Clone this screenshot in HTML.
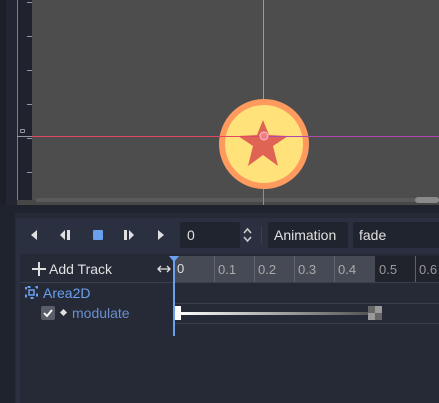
<!DOCTYPE html><html><head><style>
body{margin:0;width:439px;height:403px;overflow:hidden;background:#252a36;font-family:"Liberation Sans",sans-serif;position:relative}
div{position:absolute;box-sizing:border-box;white-space:nowrap}
.t{color:#e0e0e0;font-size:14px}
.n{font-size:13px;color:#aaa;top:262px}
</style></head><body>
<div style="left:0;top:0;width:6px;height:403px;background:#1c1f28"></div>
<div style="left:6px;top:0;width:11px;height:210px;background:#222633"></div>
<div style="left:17px;top:0;width:15px;height:205px;background:#20232e;border-left:1px solid #7a8090"></div>
<div style="left:32px;top:0;width:407px;height:200px;background:#4d4d4d"></div>
<div style="left:17px;top:200px;width:422px;height:5px;background:#474747"></div>
<div style="left:36px;top:198px;width:403px;height:4px;background:#5a5a5a;border-radius:2px"></div>
<div style="left:415px;top:197px;width:24px;height:6px;background:#8a8a8a;border-radius:3px"></div>
<div style="left:27px;top:0;width:5px;height:200px;background:repeating-linear-gradient(#20232e 0 2px,#9098a8 2px 3px,#20232e 3px 34px)"></div>
<div style="left:17px;top:136px;width:15px;height:1px;background:#9098a8"></div>
<div style="left:20px;top:129px;width:5px;height:4px;border:1px solid #9098a8;border-radius:1px"></div>
<div style="left:263px;top:0;width:1px;height:205px;background:linear-gradient(#8ab830 0 100px,#8a9a70 100px)"></div>
<div style="left:219px;top:99px;width:90px;height:90px;border-radius:50%;background:#ffe27a;border:6px solid #ff9a5e"></div>
<svg style="position:absolute;left:0;top:0" width="439" height="403"><polygon points="263,120 269,135 288,136 273,146 278,166 263,155 248,166 253,146 238,136 257,135" fill="#e06454"/>
<line x1="32" y1="136.5" x2="263" y2="136.5" stroke="#e34660"/><line x1="263" y1="136.5" x2="439" y2="136.5" stroke="#b048b0"/>
<circle cx="264" cy="136" r="4" fill="#f08080" stroke="#fbd" stroke-width="1"/></svg>
<div style="left:0;top:205px;width:439px;height:8px;background:#1f232d"></div>
<div style="left:0;top:213px;width:15px;height:190px;background:#1f232d"></div>
<div style="left:16px;top:218px;width:423px;height:185px;background:#2b3040"></div>
<div style="left:180px;top:222px;width:60px;height:26px;background:#20242f;border-radius:2px"></div>
<div class="t" style="left:187px;top:227px">0</div>
<div style="left:268px;top:222px;width:80px;height:26px;background:#20242f"></div>
<div class="t" style="left:274px;top:227px">Animation</div>
<div style="left:353px;top:222px;width:86px;height:26px;background:#20242f"></div>
<div class="t" style="left:359px;top:227px">fade</div>
<svg style="position:absolute;left:0;top:222px" width="270" height="26"><g fill="#e0e0e0"><polygon points="31,13 37,8 37,18"/><polygon points="60,13 65,8 65,18"/><rect x="67" y="8" width="3" height="10"/><rect x="124" y="8" width="3" height="10"/><polygon points="129,8 134,13 129,18"/><polygon points="158,8 164,13 158,18"/><path d="M244 11l3.5-4 3.5 4M244 15l3.5 4 3.5-4" stroke="#ccc" stroke-width="1.6" fill="none"/></g><rect x="93" y="8" width="10" height="10" fill="#6ba0ee" rx="1"/><rect x="261" y="4" width="1" height="18" fill="#3a3f4c"/></svg>
<div style="left:20px;top:254px;width:419px;height:149px;background:#252a36"></div>
<div style="left:175px;top:256px;width:200px;height:26px;background:#464a54"></div>
<div style="left:375px;top:256px;width:64px;height:26px;background:#20232c"></div>
<div style="left:20px;top:282px;width:419px;height:1px;background:#3a4050"></div>
<div style="left:175px;top:303px;width:264px;height:1px;background:#3a4050"></div>
<div style="left:175px;top:323px;width:264px;height:1px;background:#3a4050"></div>
<svg style="position:absolute;left:0;top:256px" width="439" height="80"><g stroke="#5e6270"><line x1="214.5" y1="0" x2="214.5" y2="26"/><line x1="254.5" y1="0" x2="254.5" y2="26"/><line x1="294.5" y1="0" x2="294.5" y2="26"/><line x1="334.5" y1="0" x2="334.5" y2="26"/><line x1="415.5" y1="0" x2="415.5" y2="26"/></g>
<path d="M32 13h14M39 6v14" stroke="#e0e0e0" stroke-width="2"/><path d="M158 13h12M161 10l-3 3 3 3M167 10l3 3-3 3" stroke="#e0e0e0" stroke-width="1.3" fill="none"/>
<rect x="26" y="31" width="11" height="11" fill="none" stroke="#6ba0ee" stroke-width="2" stroke-dasharray="3 5" stroke-dashoffset="-1.5"/><rect x="29" y="34" width="5" height="5" fill="none" stroke="#6ba0ee" stroke-width="1.5"/>
<rect x="41" y="50" width="14" height="14" rx="2" fill="#5a5e68"/><path d="M44 57l3 3 5-6" stroke="#fff" stroke-width="1.8" fill="none"/><rect x="61" y="54" width="5" height="5" transform="rotate(45 63.5 56.5)" fill="#e0e0e0"/>
<defs><linearGradient id="g"><stop offset="0" stop-color="#fff"/><stop offset="1" stop-color="#555"/></linearGradient></defs><rect x="178" y="56" width="190" height="3" fill="url(#g)"/><rect x="175" y="50" width="6" height="14" fill="#fff"/>
<rect x="368" y="50" width="14" height="14" fill="#999"/><rect x="368" y="50" width="7" height="7" fill="#666"/><rect x="375" y="57" width="7" height="7" fill="#666"/>
<rect x="173" y="0" width="2" height="80" fill="#6ba0ee"/><polygon points="169,0 179,0 174,6" fill="#6ba0ee"/></svg>
<div class="t" style="left:49px;top:261px">Add Track</div>
<div style="left:177px;top:261px;font-size:13px;color:#e0e0e0">0</div>
<div class="n" style="left:218px">0.1</div>
<div class="n" style="left:258px">0.2</div>
<div class="n" style="left:298px">0.3</div>
<div class="n" style="left:338px">0.4</div>
<div class="n" style="left:379px;color:#999">0.5</div>
<div class="n" style="left:419px;color:#999">0.6</div>
<div style="left:43px;top:285px;font-size:14px;color:#6ba0ee">Area2D</div>
<div style="left:72px;top:305px;font-size:14px;color:#6b8ed0">modulate</div>
</body></html>
